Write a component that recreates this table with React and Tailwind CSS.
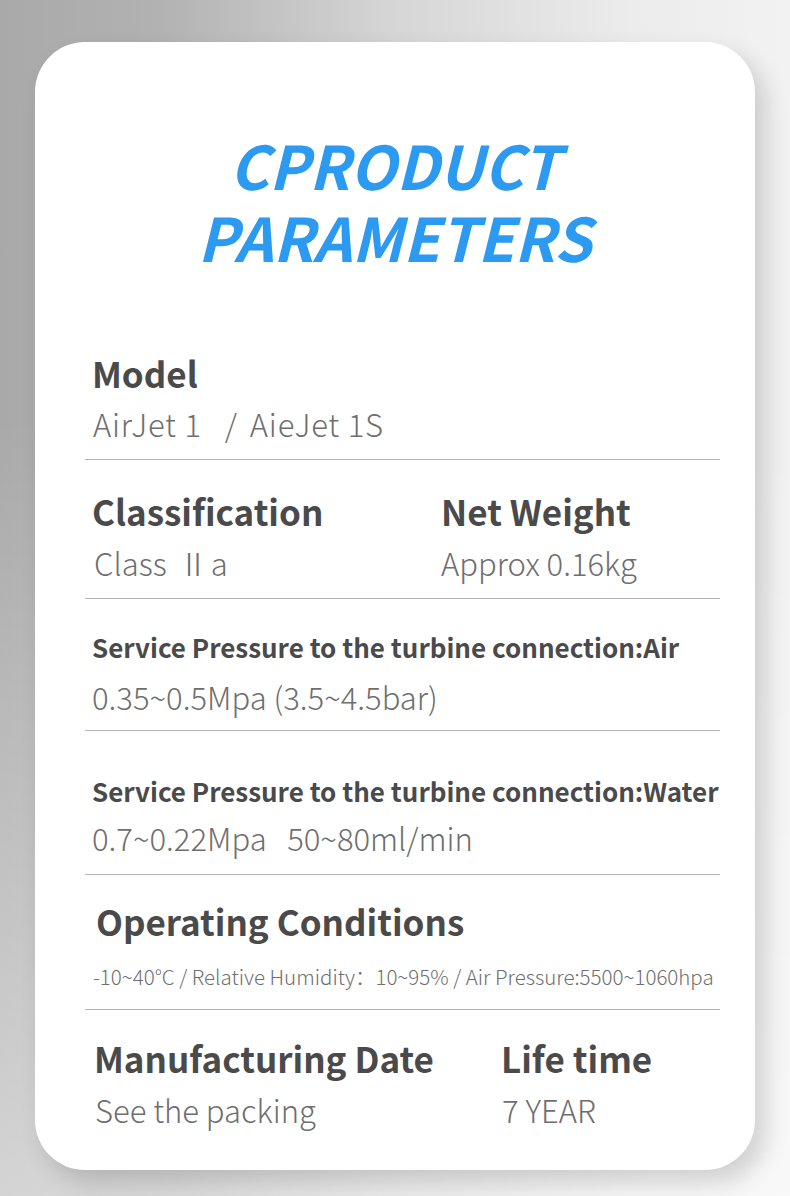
export default function App() {
  const font = { fontFamily: '"Noto Sans CJK SC", "Noto Sans", sans-serif' };
  return (
    <div
      className="w-[790px] h-[1196px] overflow-hidden bg-[linear-gradient(to_bottom,rgba(255,255,255,0)_35%,rgba(255,255,255,0.5)_100%),linear-gradient(to_right,#a9a9a9_0%,#b2b2b2_20%,#d6d6d6_50%,#ececec_80%,#f2f2f2_100%)] pt-[42px] pl-[35px]"
      style={font}
    >
      <div className="w-[720px] h-[1128px] rounded-[50px] bg-white shadow-[10px_12px_24px_rgba(0,0,0,0.16)] pt-[86px] pl-[50px] pr-[35px]">
        <h1 className="text-center text-[60px] leading-[72px] font-bold italic text-[#2b9af0] pr-[16px]">
          CPRODUCT
          <br />
          PARAMETERS
        </h1>

        {/* Model */}
        <div className="mt-[79px] pl-[7px]">
          <div className="text-[35px] leading-[44px] font-bold text-[#4a4a4a]">Model</div>
          <div className="mt-[9px] text-[31px] leading-[40px] font-light text-[#6e6e6e] pl-[1px] flex tracking-[0.8px]">
            <span>AirJet 1</span>
            <span className="ml-[23px]">/</span>
            <span className="ml-[12px]">AieJet 1S</span>
          </div>
        </div>
        <div className="mt-[15px] h-px bg-[#b5b5b5]" />

        {/* Classification / Net Weight */}
        <div className="mt-[29px] pl-[7px] flex">
          <div className="w-[349px]">
            <div className="text-[35px] leading-[44px] font-bold text-[#4a4a4a]">Classification</div>
            <div className="mt-[10px] text-[31px] leading-[40px] font-light text-[#6e6e6e] pl-[2px] flex">
              <span>Class</span>
              <span className="ml-[11px]">Ⅱ</span>
              <span className="ml-[2px]">a</span>
            </div>
          </div>
          <div>
            <div className="text-[35px] leading-[44px] font-bold text-[#4a4a4a]">Net Weight</div>
            <div className="mt-[10px] text-[31px] leading-[40px] font-light text-[#6e6e6e]">
              Approx 0.16kg
            </div>
          </div>
        </div>
        <div className="mt-[15px] h-px bg-[#b5b5b5]" />

        {/* Air */}
        <div className="mt-[31px] pl-[7px]">
          <div className="text-[26px] leading-[34px] font-bold text-[#4a4a4a] whitespace-nowrap">
            Service Pressure to the turbine connection:Air
          </div>
          <div className="mt-[13px] text-[31px] leading-[40px] font-light text-[#6e6e6e]">
            0.35~0.5Mpa (3.5~4.5bar)
          </div>
        </div>
        <div className="mt-[13px] h-px bg-[#b5b5b5]" />

        {/* Water */}
        <div className="mt-[43px] pl-[7px]">
          <div className="text-[26px] leading-[34px] font-bold text-[#4a4a4a] whitespace-nowrap">
            Service Pressure to the turbine connection:Water
          </div>
          <div className="mt-[10px] text-[31px] leading-[40px] font-light text-[#6e6e6e]">
            0.7~0.22Mpa&nbsp;&nbsp; 50~80ml/min
          </div>
        </div>
        <div className="mt-[16px] h-px bg-[#b5b5b5]" />

        {/* Operating Conditions */}
        <div className="mt-[24px] pl-[10px]">
          <div className="text-[35px] leading-[44px] font-bold text-[#4a4a4a] pl-[1px]">Operating Conditions</div>
          <div className="mt-[18px] text-[20.5px] leading-[30px] font-light text-[#6e6e6e] whitespace-nowrap -ml-[2px]">
            -10~40°C / Relative Humidity：10~95% / Air Pressure:5500~1060hpa
          </div>
        </div>
        <div className="mt-[18px] h-px bg-[#b5b5b5]" />

        {/* Manufacturing / Life time */}
        <div className="mt-[26px] pl-[9px] flex">
          <div className="w-[407px]">
            <div className="text-[35px] leading-[44px] font-bold text-[#4a4a4a]">Manufacturing Date</div>
            <div className="mt-[10px] text-[31px] leading-[40px] font-light text-[#6e6e6e] pl-[1px]">
              See the packing
            </div>
          </div>
          <div>
            <div className="text-[35px] leading-[44px] font-bold text-[#4a4a4a]">Life time</div>
            <div className="mt-[10px] text-[31px] leading-[40px] font-light text-[#6e6e6e] pl-[1px]">
              7 YEAR
            </div>
          </div>
        </div>
      </div>
    </div>
  );
}
